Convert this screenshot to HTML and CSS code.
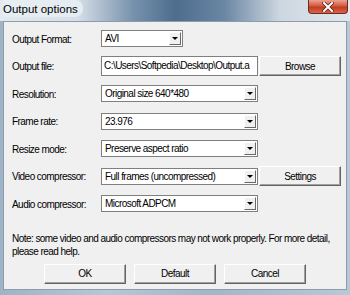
FILE: index.html
```html
<!DOCTYPE html>
<html lang="en">
  <head>
    <meta charset="UTF-8" />
    <title>Output options</title>
    <link rel="stylesheet" href="styles.css">
  </head>
  <body>
    <div class="window">
      <!-- title bar -->
      <div class="titlebar">
        <span class="title">Output options</span>
        <button class="close-btn">
          <svg width="12" height="10" viewBox="0 0 12 10">
            <path d="M2 1 L10 9 M10 1 L2 9" stroke="#5a1a12" stroke-width="3.4" stroke-linecap="square" />
            <path d="M2 1 L10 9 M10 1 L2 9" stroke="#fff" stroke-width="2" stroke-linecap="square" />
          </svg>
        </button>
      </div>

      <!-- client -->
      <div class="client">
        <div class="form-grid">
          <label class="field-label">Output Format:</label>
          <div class="field">
            <div class="combo combo-short">
              <span class="combo-text">AVI</span>
              <span class="combo-arrow"></span>
            </div>
          </div>

          <label class="field-label">Output file:</label>
          <div class="field">
            <div class="textbox">C:\Users\Softpedia\Desktop\Output.a</div>
            <button class="btn side-btn">Browse</button>
          </div>

          <label class="field-label">Resolution:</label>
          <div class="field">
            <div class="combo">
              <span class="combo-text">Original size 640*480</span>
              <span class="combo-arrow"></span>
            </div>
          </div>

          <label class="field-label">Frame rate:</label>
          <div class="field">
            <div class="combo">
              <span class="combo-text">23.976</span>
              <span class="combo-arrow"></span>
            </div>
          </div>

          <label class="field-label">Resize mode:</label>
          <div class="field">
            <div class="combo">
              <span class="combo-text">Preserve aspect ratio</span>
              <span class="combo-arrow"></span>
            </div>
          </div>

          <label class="field-label">Video compressor:</label>
          <div class="field">
            <div class="combo">
              <span class="combo-text">Full frames (uncompressed)</span>
              <span class="combo-arrow"></span>
            </div>
            <button class="btn side-btn">Settings</button>
          </div>

          <label class="field-label">Audio compressor:</label>
          <div class="field">
            <div class="combo">
              <span class="combo-text">Microsoft ADPCM</span>
              <span class="combo-arrow"></span>
            </div>
          </div>
        </div>

        <p class="note">Note: some video and audio compressors may not work properly. For more detail, please read help.</p>

        <div class="btn-row">
          <button class="btn">OK</button>
          <button class="btn">Default</button>
          <button class="btn">Cancel</button>
        </div>
      </div>
    </div>
  </body>
</html>
```

FILE: styles.css
```css
/*global*/
* {
  margin: 0;
  padding: 0;
  box-sizing: border-box;
}

body {
  font-family: "Liberation Sans", Arial, sans-serif;
  font-size: 10px;
  letter-spacing: -0.55px;
  color: #000;
  background: #fff;
}

/*window frame*/
.window {
  width: 350px;
  height: 295px;
  display: flex;
  flex-direction: column;
  background: linear-gradient(90deg, #9fb3c6 0%, #b7c7d6 30%, #a3b6c8 60%, #b9c8d6 100%);
}

.titlebar {
  height: 21px;
  display: flex;
  align-items: flex-start;
  justify-content: space-between;
  padding-left: 3px;
  padding-right: 2px;
  background: linear-gradient(90deg, #e3e9ee 0%, #d6dfe7 22%, #7892ad 38%, #4d6d8e 50%, #6a86a3 64%, #cdd7e0 80%, #e1e7ec 100%);
}

.title {
  font-size: 11.5px;
  letter-spacing: 0;
  line-height: 16px;
  color: #000;
  padding: 1px 5px 0 0;
  background: rgba(232, 238, 243, 0.85);
  border-radius: 0 8px 8px 0;
}

.close-btn {
  width: 40px;
  height: 14px;
  border: 1px solid #6b2a22;
  border-top: none;
  border-radius: 0 0 4px 4px;
  background: linear-gradient(180deg, #e8a393 0%, #d5593f 45%, #c23b22 55%, #d8664a 100%);
  display: flex;
  align-items: center;
  justify-content: center;
}

/*client area*/
.client {
  flex: 1;
  margin: 0 3px 5px;
  background: #f0f0f0;
  border: 1px solid #8d9cad;
  padding: 3px 0 0 8px;
}

.form-grid {
  display: grid;
  grid-template-columns: 89px 1fr;
  grid-auto-rows: 27.5px;
}

.field-label {
  display: flex;
  align-items: center;
  padding-top: 1px;
}

.field {
  display: flex;
  align-items: center;
}

/*combo box*/
.combo {
  width: 157px;
  height: 17px;
  background: #fff;
  border: 1px solid #7f7f7f;
  display: flex;
  align-items: center;
  padding: 1px;
}

.combo-short {
  width: 82px;
}

.combo-text {
  flex: 1;
  padding-left: 2px;
  white-space: nowrap;
  overflow: hidden;
}

.combo-arrow {
  width: 12px;
  height: 13px;
  background: #f0f0f0;
  border: 1px solid;
  border-color: #fff #696969 #696969 #fff;
  display: flex;
  align-items: center;
  justify-content: center;
}

.combo-arrow::after {
  content: "";
  border-left: 3px solid transparent;
  border-right: 3px solid transparent;
  border-top: 3px solid #000;
}

/*text box*/
.textbox {
  width: 157px;
  height: 20px;
  background: #fff;
  border: 1px solid #7f7f7f;
  padding: 0 2px;
  line-height: 18px;
  white-space: nowrap;
  overflow: hidden;
}

/*buttons*/
.btn {
  width: 82px;
  height: 20px;
  font-family: inherit;
  font-size: inherit;
  letter-spacing: inherit;
  color: #000;
  background: #f0f0f0;
  border: 1px solid;
  border-color: #fff #646464 #646464 #fff;
  box-shadow: inset -1px -1px 0 #a0a0a0;
}

.side-btn {
  margin-left: 1px;
}

.note {
  margin-top: 14px;
  line-height: 13px;
  padding-right: 10px;
}

.btn-row {
  display: flex;
  gap: 8px;
  justify-content: center;
  margin-top: 6px;
  padding-right: 8px;
}
```
